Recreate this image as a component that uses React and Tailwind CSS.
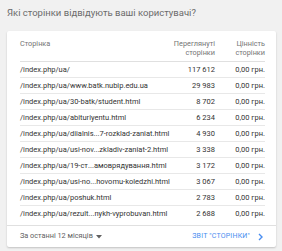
const rows = [
  ["/index.php/ua/", "117 612"],
  ["/index.php/ua/www.batk.nubip.edu.ua", "29 983"],
  ["/index.php/ua/30-batk/student.html", "8 702"],
  ["/index.php/ua/abituriyentu.html", "6 234"],
  ["/index.php/ua/diialnis...7-rozklad-zaniat.html", "4 930"],
  ["/index.php/ua/usi-nov...zkladiv-zaniat-2.html", "3 338"],
  ["/index.php/ua/19-ст...амоврядування.html", "3 172"],
  ["/index.php/ua/usi-no...hovomu-koledzhi.html", "3 067"],
  ["/index.php/ua/poshuk.html", "2 783"],
  ["/index.php/ua/rezult...nykh-vyprobuvan.html", "2 688"],
];

export default function App() {
  return (
    <div className="h-[251px] w-[282px] bg-[#f1f1f1] pt-[5px] font-['Roboto',sans-serif]">
      <h2 className="pl-[7px] text-[9.5px] leading-[16px] text-[#6b6b6b]">
        Які сторінки відвідують ваші користувачі?
      </h2>
      <div className="mt-[10px] ml-[7px] w-[269px] rounded-[2px] bg-white shadow-[0_1px_2px_rgba(0,0,0,0.2)]">
        <div className="pl-[13px] pr-[11px]">
          <div className="flex items-start border-b border-[#e0e0e0] pt-[8px] pb-[4px] text-[7.3px] leading-[9px] text-[#757575]">
            <div className="flex-1">Сторінка</div>
            <div className="w-[36px] whitespace-nowrap text-right">
              <div className="-ml-[10px]">
                Переглянуті
                <br />
                сторінки
              </div>
            </div>
            <div className="w-[50px] text-right">
              Цінність
              <br />
              сторінки
            </div>
          </div>
          {rows.map(([page, views], i) => (
            <div
              key={page}
              className={
                "flex h-[16px] items-center text-[7.5px] text-[#333] " +
                (i < rows.length - 1 ? "border-b border-[#e8e8e8]" : "")
              }
            >
              <div className="flex-1 whitespace-nowrap">{page}</div>
              <div className="w-[36px] text-right">{views}</div>
              <div className="w-[50px] text-right">0,00 грн.</div>
            </div>
          ))}
        </div>
        <div className="mt-[3px] flex h-[22px] items-center border-t border-[#e0e0e0] pl-[13px] pr-[13px] text-[7.3px]">
          <div className="flex flex-1 items-center gap-[3px] text-[#616161]">
            За останні 12 місяців
            <svg width="6" height="4" viewBox="0 0 6 4">
              <path d="M0 0h6L3 3.5z" fill="#616161" />
            </svg>
          </div>
          <div className="text-[7px] tracking-[0.2px] text-[#4a8ef0]">ЗВІТ "СТОРІНКИ"</div>
          <svg className="ml-[8px]" width="5" height="8" viewBox="0 0 5 8">
            <path d="M1 1l3 3-3 3" stroke="#4a8ef0" strokeWidth="1.4" fill="none" />
          </svg>
        </div>
      </div>
    </div>
  );
}
